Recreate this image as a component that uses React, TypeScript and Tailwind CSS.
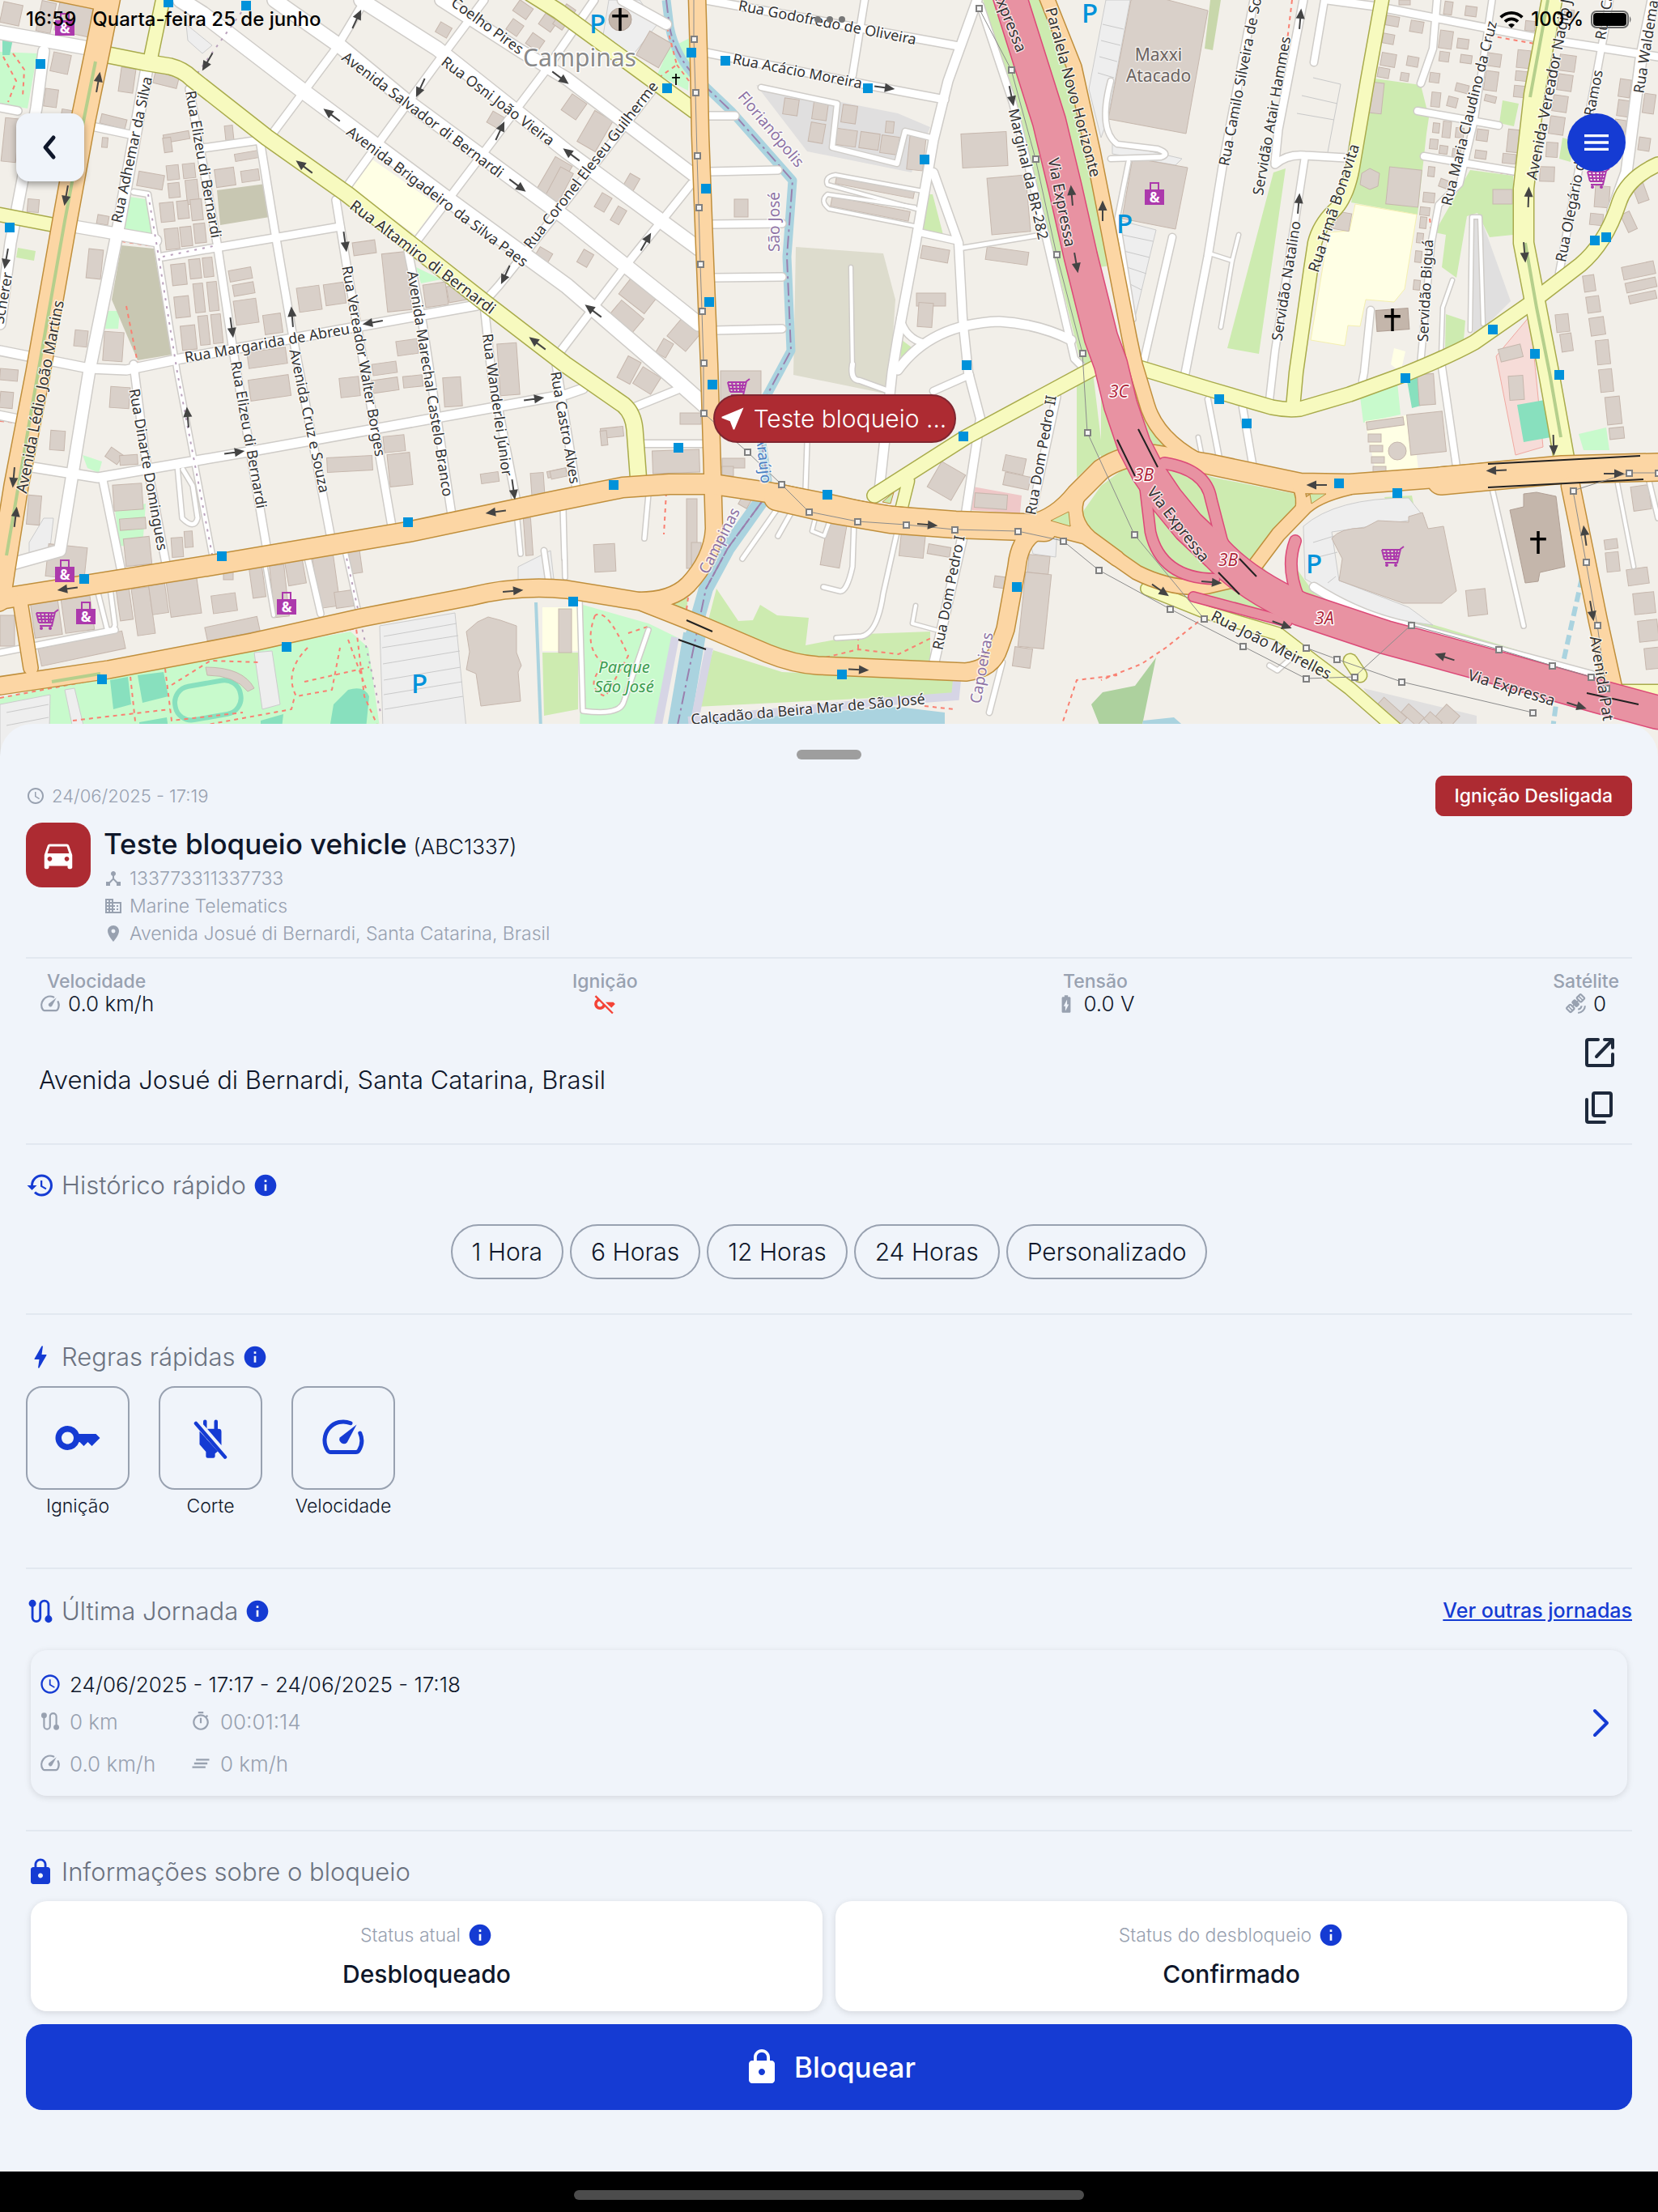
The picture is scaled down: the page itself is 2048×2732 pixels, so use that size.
import React from 'react';
import {
  MdAccessTime,
  MdBatteryChargingFull,
  MdBolt,
  MdBusiness,
  MdClearAll,
  MdDeviceHub,
  MdDirectionsCar,
  MdHistory,
  MdInfo,
  MdKey,
  MdKeyOff,
  MdLocationOn,
  MdLock,
  MdMenu,
  MdNearMe,
  MdOutlineTimer,
  MdSatelliteAlt,
  MdWifi,
} from 'react-icons/md';

/* ---------- Map data ---------- */

type Road = [d: string, width: number];
type Label = [text: string, x: number, y: number, angle: number, size: number];
type Box = [x: number, y: number, w: number, h: number, angle: number];

const whiteRoads: Road[] = [
  ['M223 0L250 17L375 113L549 243L700 353L836 470L872 502', 18],
  ['M339 0L420 57L500 123L700 270L863 400', 17],
  ['M446 0L540 60L700 187L863 307', 17],
  ['M545 0L643 63L700 97L858 217', 15],
  ['M769 0L823 30', 12],
  ['M451 0L415 60L335 167', 9],
  ['M598 0L536 83L429 230', 9],
  ['M734 0L674 87L594 193L513 300', 9],
  ['M809 107L680 273L616 353L598 373', 9],
  ['M854 227L769 333L693 433', 9],
  ['M181 87L147 277L110 460L74 680L13 697', 14],
  ['M0 40L112 60', 16],
  ['M54 63L45 133L13 300L0 400', 13],
  ['M0 133L22 137', 9],
  ['M118 157L165 167', 9],
  ['M94 280L192 297', 14],
  ['M165 237L183 240L196 317L219 460L263 690', 6],
  ['M234 110L268 300L288 433L330 680', 9],
  ['M250 183L321 173L339 283L362 417L408 660', 9],
  ['M201 317L344 293L420 280', 9],
  ['M415 247L429 333L484 650', 9],
  ['M0 433L110 455L156 457L223 443L589 377', 11],
  ['M504 310L522 400L558 636', 9],
  ['M598 377L607 460L638 620', 9],
  ['M687 450L713 610', 9],
  ['M40 577L121 590L312 557L700 487L720 480', 11],
  ['M165 450L179 560L205 696', 9],
  ['M127 593L150 706', 9],
  ['M0 513L20 517', 10],
  ['M219 575L225 640Q240 655 244 640L238 600L226 580', 5],
  ['M792 548L870 548', 8],
  ['M783 503L845 478', 9],
  ['M876 143L908 143', 9],
  ['M876 212L961 210', 9],
  ['M879 277L966 276', 9],
  ['M881 343L966 342', 9],
  ['M883 408L966 406', 9],
  ['M872 0L1184 57', 9],
  ['M872 65L1082 107L1167 123', 9],
  ['M1068 0L1053 93', 8],
  ['M1207 0L1171 100L1153 173L1131 300L1109 417L1102 460L1086 606', 11],
  ['M1211 7L1251 127L1292 293L1327 443L1340 456', 8],
  ['M1153 213L1184 300L1189 393L1196 460L1211 517L1193 634', 10],
  ['M1135 287L1180 297', 8],
  ['M1184 307L1287 290', 5],
  ['M1109 457Q1150 400 1234 397Q1283 400 1323 420', 11],
  ['M1112 393Q1118 418 1142 424', 8],
  ['M1053 450Q1050 470 1062 470L1095 482', 6],
  ['M1153 483L1198 463', 8],
  ['M1051 330L1053 458', 4],
  ['M940 108L1034 128L1028 182L1108 202L1118 162L1150 170', 6],
  ['M1140 236L1032 216Q1018 218 1022 228L1132 258', 4],
  ['M1134 280L1024 258Q1012 248 1022 240L1130 256', 4],
  ['M997 547L995 605', 5],
  ['M966 620L917 690', 5],
  ['M979 630L961 662', 5],
  ['M1008 636L1003 656L1018 662L1026 640', 4],
  ['M1055 643L1053 700Q1046 732 1037 730L1017 725', 5],
  ['M1109 653L1091 733Q1084 782 1064 786L1033 788', 5],
  ['M1131 748L1127 770L1156 778', 4],
  ['M1189 663L1153 822', 11],
  ['M1305 490L1274 636', 9],
  ['M1238 818L1222 880', 6],
  ['M696 627L698 713', 5],
  ['M801 610L796 665', 5],
  ['M326 690L338 760', 4],
  ['M378 680L396 758', 7],
  ['M426 680L446 770', 5],
  ['M120 728L132 776Q138 784 142 772L136 726', 5],
  ['M142 778L0 806', 7],
  ['M638 632L643 684', 5],
  ['M672 680L678 722', 6],
  ['M695 628L697 690', 5],
  ['M801 778L770 868Q764 884 720 878L716 740', 5],
  ['M1549 0L1511 200L1492 317L1463 466', 9],
  ['M1610 0L1579 160L1575 200', 9],
  ['M1575 203Q1590 190 1612 192L1663 195', 9],
  ['M1612 193L1575 433L1568 494', 8],
  ['M1636 0L1623 77', 8],
  ['M1448 293L1413 445', 8],
  ['M1494 313L1522 322L1508 404M1522 322L1530 290', 4],
  ['M1640 0L1700 8L1900 47L2048 70', 9],
  ['M1775 0L1770 60L1755 103', 8],
  ['M1843 0L1821 150L1803 227L1777 253L1768 300L1755 445', 7],
  ['M1751 137L1851 155', 8],
  ['M1759 193L1873 212', 8],
  ['M1988 0L1983 33L1950 210L1926 337', 8],
  ['M2042 0L2027 73L2009 213L1992 260', 13],
  ['M1693 383L1685 460L1683 470', 8],
  ['M1794 346L1782 380L1780 440', 4],
  ['M1816 408L1818 268L1828 268L1832 400', 4],
  ['M1781 453L1799 576', 8],
  ['M1492 493L1508 576', 6],
  ['M1480 540L1486 570', 4],
  ['M1535 503L1549 584', 8],
  ['M1843 603L1882 773', 5],
  ['M1998 597L2018 700', 4],
  ['M2036 590L2048 640', 5],
  ['M1623 725Q1680 762 1742 774L1966 834', 10],
  ['M1598 810L1578 828L1568 822', 5],
  ['M1372 100Q1356 160 1380 178L1430 184Q1446 190 1434 194L1372 196', 6],
  ['M1394 200L1380 270L1400 394', 5],
];

const yellowRoads: Road[] = [
  ['M134 68L179 77L210 82Q226 86 237 97L330 170L429 240L603 377L698 450L770 500Q782 510 784 530L789 597', 19],
  ['M201 0L185 77', 16],
  ['M0 265L67 278', 16],
  ['M655 -8L690 14L858 137', 18],
  ['M1360 450L1193 540L1080 612', 17],
  ['M1122 594L1113 630', 14],
  ['M1707 0L1689 100L1672 200Q1666 240 1650 258Q1630 276 1624 300L1619 333L1601 460L1597 504', 16],
  ['M1917 0L1895 117L1882 233L1882 300L1895 367L1913 460L1932 566', 24],
  ['M2048 203Q2010 220 2000 250Q1984 300 1952 327L1887 377L1821 423Q1790 440 1733 463L1667 487L1606 505Q1590 507 1571 503L1492 480L1400 452', 17],
  ['M1417 727L1492 757L1579 783L1623 817L1667 850L1724 900', 15],
  ['M1668 816L1680 834', 16],
  ['M2000 855L2048 855', 18],
];

const orangeRoads: Road[] = [
  ['M56 -8L134 8', 12],
  ['M134 -5L121 60L103 147L80 273L47 460L20 600L4 700L-2 740', 29],
  ['M861 -5L863 67L865 167L870 300L876 450L880 583L882 653Q880 690 850 722Q830 742 790 742', 20],
  ['M0 740L112 722L268 697L504 657L690 618L769 602L827 598L881 598L948 608L1019 622L1082 636L1180 646L1260 650Q1300 648 1330 610L1360 580Q1390 560 1426 562L1492 573L1606 597L1667 598L1799 588L1865 582L2048 576', 24],
  ['M960 614L1030 630L1100 642L1180 648L1290 652', 32],
  ['M1780 594L1865 586L1930 580L2048 577', 33],
  ['M0 847L134 827L312 793L446 763L580 737Q640 722 700 728L792 743L868 773L948 807Q980 820 1010 822L1193 830Q1226 826 1234 800L1242 777L1256 700Q1260 660 1290 652', 21],
  ['M1332 610Q1318 640 1346 665L1380 690', 18],
  ['M1290 650L1341 663L1404 707Q1450 730 1492 724L1522 717L1549 700L1579 660L1608 630Q1624 612 1667 602', 17],
  ['M1602 600Q1610 612 1606 632', 12],
  ['M25 743L38 825', 17],
  ['M1940 600L1957 683L1974 767L1994 858', 22],
  ['M1292 -5L1327 83L1350 187L1367 273L1395 417L1402 450L1417 500Q1430 545 1490 574', 17],
];

const pinkRoads: Road[] = [
  ['M1413 590L1421 657Q1434 714 1500 715', 12],
  ['M1438 572Q1490 580 1496 617L1509 667L1524 700', 13],
  ['M1600 668Q1588 700 1604 738L1645 770', 13],
  ['M1474 737L1590 768', 11],
  ['M1247 -5L1296 150L1316 233L1335 317L1360 417L1372 450L1384 500L1401 550L1418 583L1441 617L1468 650L1504 684Q1540 722 1606 752L1711 787L1843 823L1974 860L2048 880', 40],
];

const river = 'M823 0L827 33Q834 70 862 98L903 137L979 223L972 317L977 433L948 487Q932 510 940 540L948 593L943 617L899 677L872 727';

const streetLabels: Label[] = [
  ['Rua Adhemar da Silva', 163, 185, -78, 18],
  ['Rua Elizeu di Bernardi', 251, 203, 80, 18],
  ['Avenida Lédio João Martins', 50, 490, -79, 19],
  ['Avenida Brigadeiro da Silva Paes', 540, 243, 37, 18],
  ['Avenida Salvador di Bernardi', 522, 142, 37, 18],
  ['Rua Osni João Vieira', 615, 125, 37, 18],
  ['Coelho Pires', 602, 32, 36, 18],
  ['Rua Coronel Eleseu Guilherme', 730, 204, -52, 18],
  ['Rua Altamiro di Bernardi', 522, 318, 37, 19],
  ['Rua Margarida de Abreu', 330, 424, -10, 18],
  ['Rua Vereador Walter Borges', 449, 446, 80, 18],
  ['Rua Elizeu di Bernardi', 307, 537, 80, 18],
  ['Avenida Cruz e Souza', 382, 520, 78, 18],
  ['Avenida Marechal Castelo Branco', 531, 474, 81, 18],
  ['Rua Wanderlei Júnior', 614, 500, 82, 18],
  ['Rua Castro Alves', 698, 528, 80, 18],
  ['Rua Dinarte Domingues', 183, 580, 80, 18],
  ['Scherer', 4, 368, -80, 18],
  ['Rua Godofredo de Oliveira', 1022, 28, 11, 18],
  ['Rua Acácio Moreira', 985, 88, 11, 18],
  ['Marginal da BR-282', 1270, 215, 77, 18],
  ['Via Expressa', 1311, 250, 79, 19],
  ['Via Expressa', 1241, 12, 68, 19],
  ['Paralela Novo Horizonte', 1325, 114, 75, 19],
  ['Rua Camilo Silveira de Souza', 1535, 86, -79, 18],
  ['Servidão Atair Hammes', 1571, 143, -80, 18],
  ['Servidão Natalino', 1589, 347, -81, 18],
  ['Rua Irmã Bonavita', 1648, 257, -72, 19],
  ['Servidão Biguá', 1761, 359, -87, 18],
  ['Rua Maria Claudino da Cruz', 1815, 140, -76, 18],
  ['Avenida Vereador Nagib Jabor', 1918, 90, -79, 19],
  ['Rua Olegário da Silva Ramos', 1951, 205, -79, 18],
  ['Rua Waldemar', 2034, 54, -81, 18],
  ['Rua Ca', 1982, 20, -80, 18],
  ['Rua Dom Pedro II', 1286, 562, -80, 18],
  ['Rua Dom Pedro I', 1172, 732, -79, 18],
  ['Calçadão da Beira Mar de São José', 998, 876, -5, 18],
  ['Via Expressa', 1455, 648, 52, 19],
  ['Rua João Meirelles', 1570, 797, 27, 19],
  ['Via Expressa', 1867, 850, 17, 19],
  ['Avenida Pat', 1978, 838, 81, 19],
];

const districtLabels: Label[] = [
  ['Florianópolis', 952, 160, 50, 19],
  ['São José', 957, 274, -90, 19],
  ['Campinas', 889, 668, -63, 19],
  ['Capoeiras', 1213, 825, -80, 19],
];

const exits: [string, number, number][] = [
  ['3C', 1382, 485],
  ['3B', 1413, 588],
  ['3B', 1517, 693],
  ['3A', 1636, 765],
];

const parkings = [[738, 30], [1346, 17], [1389, 277], [518, 845], [1623, 697]];

const busStops = [
  [208, 3], [304, 7], [50, 79], [12, 281], [854, 65], [896, 75], [1072, 109], [824, 109],
  [1142, 197], [872, 233], [876, 373], [1194, 451], [1970, 297], [1984, 293], [1844, 407],
  [1896, 437], [274, 687], [504, 645], [104, 715], [354, 799], [126, 839], [880, 475],
  [838, 553], [758, 599], [1022, 611], [1190, 539], [708, 743], [1256, 725], [1040, 833],
  [1736, 467], [1506, 493], [1540, 523], [1654, 597], [1726, 609], [1926, 463],
];

const powerLines = [
  [[857, -10], [857, 48], [859, 114], [861, 192], [863, 256], [865, 326], [867, 384], [869, 448], [869, 510], [923, 558], [965, 598], [999, 632], [1059, 644], [1119, 648], [1179, 654], [1257, 656], [1313, 668], [1357, 704], [1445, 752], [1535, 798], [1613, 838], [1673, 836], [1743, 772], [1851, 802], [1917, 822], [1965, 836]],
  [[1209, 10], [1249, 86], [1279, 196], [1305, 314], [1337, 436], [1343, 534], [1401, 660], [1487, 764]],
  [[1613, 800], [1651, 814], [1731, 842], [1893, 880]],
  [[2048, 584], [2012, 584], [1943, 606], [1959, 694], [1973, 772], [1984, 850]],
];

const arrows: [number, number, number][] = [
  [121, 103, -80], [82, 240, 100], [8, 318, 100], [257, 75, 120], [440, 25, -65], [520, 107, 115],
  [411, 143, -143], [377, 207, -143], [638, 228, 37], [617, 163, -65], [625, 338, 115], [426, 297, 82],
  [286, 403, 82], [361, 393, -95], [462, 398, 170], [665, 425, -143], [691, 95, 37], [797, 300, -60],
  [734, 385, -143], [707, 192, -143], [1091, 108, 8], [1249, 117, 78], [1324, 243, -95], [1329, 323, 80],
  [1362, 262, -90], [1606, 25, -85], [1604, 253, -85], [1888, 245, -88], [1883, 310, 85], [17, 588, 95],
  [19, 640, -83], [232, 517, -95], [288, 559, -8], [658, 493, -8], [634, 603, 82], [614, 632, 172],
  [85, 727, 172], [632, 730, -5], [1144, 648, 5], [1059, 827, 3], [1628, 599, 180], [1850, 581, 178],
  [1992, 585, 0], [1919, 548, 88], [1958, 663, -98], [1966, 753, 80], [1495, 719, 5], [1582, 771, 20],
  [1786, 812, -162], [1946, 871, 17], [1432, 728, 35],
];

const buildings: Box[] = [
  // north-west blocks
  [2, 4, 24, 26, 12], [48, 2, 18, 38, 12], [70, 6, 46, 36, 12], [64, 66, 22, 24, 12], [55, 110, 16, 22, 8],
  [148, 84, 18, 30, 8], [190, 92, 30, 14, 14], [4, 146, 18, 54, 6], [76, 136, 18, 8, 10], [124, 144, 32, 12, 14],
  [126, 170, 7, 12, 5], [202, 164, 32, 10, -10], [202, 170, 10, 18, -8], [278, 155, 10, 18, -6], [290, 188, 30, 9, -10],
  [34, 246, 14, 16, 5], [120, 266, 14, 11, 10], [108, 308, 18, 36, 6], [92, 408, 16, 20, 6], [128, 410, 24, 36, 4],
  [206, 204, 15, 18, -6], [226, 202, 15, 18, -6], [208, 226, 14, 18, -6], [230, 222, 15, 30, -6], [198, 250, 17, 24, -6],
  [219, 248, 14, 22, -6], [236, 246, 14, 26, -6], [204, 282, 17, 26, -6], [223, 280, 14, 24, -6], [240, 276, 14, 24, -6],
  [170, 214, 32, 18, 10], [266, 208, 24, 22, -8], [298, 210, 22, 14, -8], [212, 326, 18, 26, -6], [234, 320, 14, 24, -6],
  [251, 318, 12, 24, -6], [216, 366, 18, 26, -6], [240, 350, 12, 36, -6], [257, 348, 12, 36, -6], [224, 402, 18, 30, -6],
  [246, 390, 12, 36, -6], [262, 388, 12, 36, -6], [283, 332, 28, 14, -10], [288, 350, 26, 14, -10], [290, 370, 28, 30, -8],
  [326, 388, 22, 24, -8], [368, 354, 28, 30, -8], [401, 350, 25, 26, -8], [436, 298, 28, 16, -8], [475, 312, 30, 72, -6],
  [524, 350, 28, 28, -8], [553, 352, 24, 20, -10], [490, 420, 26, 18, -8], [460, 448, 30, 14, -8], [616, 424, 24, 64, -4],
  [306, 432, 48, 20, -8], [308, 466, 50, 26, -8], [420, 466, 24, 24, -6], [456, 468, 36, 16, -8], [498, 464, 24, 14, -6],
  [548, 466, 22, 36, -4], [474, 538, 26, 20, -6], [480, 560, 28, 40, -6], [404, 564, 56, 18, -3], [594, 584, 22, 12, -8],
  [656, 584, 16, 28, -4], [676, 580, 24, 8, -12], [136, 478, 24, 26, 4], [132, 556, 18, 14, 35], [148, 562, 22, 12, -4],
  [62, 532, 18, 24, 4], [34, 612, 16, 36, 5], [0, 484, 16, 20, 5], [0, 456, 22, 14, 5], [140, 598, 36, 32, -4],
  [148, 640, 32, 14, -4], [154, 664, 32, 34, -6], [212, 664, 14, 24, -4], [228, 656, 10, 20, -4],
  // south-west blocks
  [58, 674, 48, 40, 6], [40, 738, 34, 48, -8], [78, 738, 36, 42, -8], [0, 760, 18, 38, 0], [48, 790, 106, 22, -12],
  [146, 728, 16, 38, -8], [166, 726, 22, 58, -8], [186, 722, 20, 36, -8], [208, 714, 38, 46, -8], [262, 734, 30, 22, -8],
  [254, 768, 66, 18, -12], [276, 704, 12, 12, 0], [310, 700, 16, 38, -8], [336, 698, 18, 64, -6], [354, 692, 22, 30, -10],
  [390, 686, 26, 64, -8], [414, 730, 22, 20, -8], [432, 680, 14, 28, -8], [648, 640, 9, 46, -4], [690, 752, 16, 54, 0],
  // centre
  [636, 4, 20, 16, 35], [668, 20, 18, 16, 35], [628, 26, 16, 16, 35], [652, 44, 18, 16, 35],
  [540, 30, 16, 14, 30], [604, 140, 16, 16, 30], [672, 196, 24, 50, 30], [698, 120, 22, 24, 35], [722, 140, 26, 44, 30],
  [690, 6, 14, 30, 35], [662, 308, 18, 16, 30], [682, 208, 18, 40, 28], [772, 216, 14, 22, 30], [738, 240, 14, 20, 30],
  [758, 256, 12, 20, 30], [716, 310, 14, 18, 30], [768, 352, 40, 26, 38], [752, 378, 36, 36, 40], [830, 398, 30, 30, 40],
  [814, 420, 14, 20, 30], [768, 442, 18, 30, 28], [786, 458, 26, 24, 32], [840, 510, 26, 14, 0], [742, 528, 28, 12, -6],
  [742, 532, 8, 18, -6], [806, 556, 58, 28, -2], [890, 458, 50, 44, 0], [892, 566, 28, 12, 0], [892, 576, 14, 12, 0],
  [734, 672, 26, 34, -3], [848, 616, 13, 86, 0], [854, 670, 12, 28, 0], [914, 614, 12, 12, 30], [680, 580, 20, 10, -12],
  [792, 44, 32, 34, 30], [907, 246, 17, 22, 0],
  [968, 122, 18, 20, 8], [1004, 126, 18, 22, 8], [1040, 130, 18, 22, 8], [1000, 152, 18, 24, 10], [1032, 160, 26, 20, 8],
  [1062, 164, 24, 20, 8], [1088, 168, 22, 22, 8], [1122, 166, 20, 44, 6], [1094, 150, 10, 14, 6],
  [1032, 224, 98, 12, 11], [1026, 252, 98, 12, 11],
  [1188, 164, 56, 42, -3], [1222, 218, 48, 70, -5], [1138, 306, 34, 16, 10], [1218, 308, 52, 16, 8],
  [1132, 362, 36, 16, 0], [1134, 374, 18, 30, 4], [1152, 576, 34, 36, 30], [1240, 564, 26, 20, 12], [1240, 586, 32, 16, 12],
  [1204, 610, 40, 18, 4], [1018, 642, 24, 58, 10], [1112, 656, 30, 32, 6], [1146, 674, 28, 12, 10],
  [1270, 686, 26, 22, 6], [1262, 708, 32, 92, 6], [1252, 800, 22, 24, 8], [1228, 712, 14, 14, 8],
  // east
  [1692, 102, 16, 38, 6], [1714, 208, 40, 46, 6], [1646, 262, 22, 22, 10],
  [1712, 20, 16, 12, 10], [1728, 0, 14, 6, 0], [1742, 26, 16, 14, 10], [1708, 42, 14, 12, 10], [1706, 66, 18, 16, 10],
  [1738, 70, 14, 12, 10], [1702, 84, 14, 12, 10], [1730, 90, 10, 10, 10], [1784, 2, 10, 16, 8], [1810, 8, 14, 12, 8],
  [1778, 38, 16, 22, 8], [1800, 48, 14, 12, 8], [1778, 64, 12, 12, 8], [1804, 68, 14, 10, 8], [1766, 90, 12, 12, 8],
  [1798, 104, 16, 10, 14], [1768, 114, 11, 18, 6], [1788, 120, 12, 12, 14], [1836, 66, 18, 16, 8], [1834, 88, 16, 24, 8],
  [1834, 118, 14, 8, 14], [1770, 152, 8, 12, 6], [1782, 150, 10, 20, 6], [1798, 158, 10, 12, 6], [1766, 172, 10, 12, 6],
  [1778, 180, 10, 10, 8], [1794, 184, 10, 10, 8], [1824, 160, 14, 14, 8], [1822, 186, 14, 10, 8], [1764, 206, 8, 12, 6],
  [1778, 222, 12, 10, 20], [1758, 238, 14, 12, 6], [1754, 256, 12, 10, 6], [1754, 268, 8, 14, 6], [1750, 288, 8, 12, 6],
  [1748, 310, 8, 14, 6], [1746, 346, 8, 12, 6], [1874, 62, 16, 22, 6], [1872, 88, 16, 12, 6], [1870, 106, 14, 14, 6],
  [1884, 26, 12, 12, 6], [1862, 160, 14, 28, 6], [1856, 190, 16, 12, 6], [1844, 234, 24, 18, 0], [1932, 12, 12, 12, 6],
  [1926, 68, 20, 20, 8], [1924, 92, 18, 20, 8], [1918, 118, 18, 20, 8], [1914, 144, 18, 22, 8], [1910, 176, 14, 18, 4],
  [1902, 206, 18, 18, 2], [2000, 98, 14, 22, 8], [1998, 124, 18, 20, 8], [1994, 148, 14, 22, 8], [2030, 116, 14, 24, 8],
  [2024, 170, 14, 16, 8], [1970, 230, 18, 26, 4], [1964, 264, 16, 14, 6], [2006, 262, 12, 24, -25], [2018, 218, 14, 32, -20],
  [2004, 326, 40, 16, -12], [2008, 346, 38, 12, -12], [2012, 362, 34, 10, -12], [1922, 388, 16, 22, -6],
  [1928, 412, 14, 22, -8], [1852, 428, 28, 16, -14], [1956, 340, 14, 20, -8], [1960, 366, 16, 20, -8],
  [1964, 392, 18, 22, -8], [1972, 420, 16, 30, -6], [1976, 456, 16, 28, -6], [1984, 490, 18, 34, -6], [1988, 528, 18, 14, -6],
  [1864, 464, 18, 30, -4], [1752, 462, 20, 38, -4], [1740, 510, 44, 50, -6], [1688, 518, 46, 10, -8],
  [1690, 536, 16, 10, 0], [1692, 550, 16, 8, 0], [1694, 564, 16, 8, 0], [1696, 576, 16, 8, 0],
  [1812, 728, 24, 32, -6], [2016, 600, 22, 30, -8], [1982, 666, 16, 12, -8], [1984, 682, 16, 24, -6],
  [2010, 702, 26, 20, -8], [2018, 732, 26, 26, -6], [2024, 766, 24, 26, -6], [2032, 800, 20, 26, -6],
  [1700, 872, 38, 14, 42], [1732, 876, 26, 14, 42], [1776, 874, 22, 24, 42], [1760, 884, 20, 12, 42],
];

function RoadLayer({ roads, casing, fill }: { roads: Road[]; casing: string; fill: string }) {
  return (
    <g fill="none" strokeLinejoin="round">
      {roads.map(([d, w]) => (
        <path key={`c${d}`} d={d} stroke={casing} strokeWidth={w + 3} strokeLinecap="round" />
      ))}
      {roads.map(([d, w]) => (
        <path key={d} d={d} stroke={fill} strokeWidth={w} strokeLinecap="round" />
      ))}
    </g>
  );
}

function MapLabels({ labels, color, halo }: { labels: Label[]; color: string; halo: string }) {
  return (
    <g fill={color} stroke={halo} strokeWidth={3} paintOrder="stroke" strokeLinejoin="round" textAnchor="middle">
      {labels.map(([text, x, y, angle, size]) => (
        <text key={`${text}${x}`} fontSize={size} transform={`translate(${x} ${y}) rotate(${angle})`} dy="6">
          {text}
        </text>
      ))}
    </g>
  );
}

function Cross({ x, y, s }: { x: number; y: number; s: number }) {
  return (
    <path
      d={`M${x} ${y - s}V${y + s}M${x - s * 0.7} ${y - s * 0.3}H${x + s * 0.7}`}
      stroke="#000"
      strokeWidth={s / 4}
    />
  );
}

function ShopBag({ x, y }: { x: number; y: number }) {
  return (
    <g>
      <rect x={x - 12} y={y - 5} width={24} height={19} fill="#ac39ac" />
      <path d={`M${x - 5} ${y - 5}V${y - 13}H${x + 5}V${y - 5}`} fill="none" stroke="#ac39ac" strokeWidth={2} />
      <text x={x} y={y + 11} fontSize={17} fontWeight={700} fill="#fff" textAnchor="middle">&amp;</text>
    </g>
  );
}

function Cart({ x, y }: { x: number; y: number }) {
  return (
    <g transform={`translate(${x} ${y})`} fill="none" stroke="#ac39ac" strokeWidth={2}>
      <path d="M14 -12L10 -9L6 8H-9M-13 -8H10M-12 -4H9M-11 0H8M-10 4H7M-13 -8L-10 4M-8 -8L-6 4M-3 -8L-2 4M2 -8V4M6 -8L4 4" />
      <circle cx={-7} cy={11} r={1} />
      <circle cx={4} cy={11} r={1} />
    </g>
  );
}

function MapCanvas() {
  return (
    <svg
      viewBox="0 0 2048 934"
      preserveAspectRatio="xMidYMin slice"
      className="block w-full bg-[#f2efe9] font-['Noto_Sans',sans-serif]"
      role="img"
      aria-label="Mapa"
    >
      {/* land use */}
      <g fill="#cdebb0">
        <path d="M1698 97L1755 105L1765 145L1762 165L1751 265L1669 250Z" />
        <path d="M1816 210L1869 217L1869 290L1840 293L1825 263L1812 267L1799 343L1781 330L1786 290L1772 287Z" />
        <path d="M1573 213L1588 208L1555 437L1516 430Z" />
        <path d="M1856 124L1876 128L1870 156L1852 152ZM1930 170L1944 174L1940 200L1926 196ZM1786 388L1810 396L1808 420L1785 430Z" />
        <path d="M1134 240L1152 240L1165 290L1138 286ZM1114 420L1130 432L1112 450Z" />
        <path d="M1330 470L1350 460L1362 560L1330 590ZM1360 460L1375 500L1400 556L1360 575Z" />
        <path d="M1400 450L1416 510L1444 550L1424 556L1400 500Z" />
        <path d="M1332 640L1360 600L1400 570L1440 572L1500 590L1600 610L1605 635L1560 700L1600 750L1540 745L1450 720L1400 700L1350 670Z" />
        <path d="M1480 730L1530 720L1580 765ZM1600 700L1625 735L1645 760L1600 745Z" />
        <path d="M885 727L912 767L930 766L939 747L960 760L999 763L995 797L1068 783L1149 780L1149 820L992 813L872 777Z" />
        <path d="M881 803L966 830L1180 840L1178 857L859 873Z" />
        <path d="M806 752L850 738L846 768ZM670 806L714 806L714 876L672 884ZM1710 614L1744 612L1746 622L1716 628Z" />
        <path d="M22 306L44 310L42 322L20 318Z" />
      </g>
      <path d="M1623 738L1720 772L1966 846" stroke="#cdebb0" strokeWidth={30} fill="none" />
      <path d="M1222 -5L1270 150L1296 260L1318 340L1345 450" stroke="#cdebb0" strokeWidth={18} fill="none" />
      <path d="M1275 -5L1312 100L1345 230L1356 330" stroke="#cdebb0" strokeWidth={22} fill="none" />
      <g fill="#c8facc">
        <path d="M0 64L46 66L34 134L0 128Z" />
        <path d="M160 243L180 246L188 292L153 286Z" />
        <path d="M67 847L201 823L433 780L455 800L475 940L0 940L0 862Z" />
        <path d="M720 747L801 770L836 787L809 900L716 900Z" />
        <path d="M514 330L545 345L520 350ZM1680 490L1726 472L1730 512L1684 522ZM1950 536L1984 528L1988 556L1956 556Z" />
        <path d="M142 630L180 622L176 676L148 674ZM102 562L126 570L122 584L108 578ZM132 384L148 384L146 406L130 406Z" />
        <path d="M854 46L826 60L812 92L850 112Z" />
      </g>
      <g fill="#c8c7b2">
        <path d="M268 235L328 227L333 268L272 278Z" />
        <path d="M150 303L190 307L212 438L170 445L138 370Z" />
      </g>
      <path d="M983 305L1091 313L1106 370L1098 487L980 463Z" fill="#dddccd" />
      <path d="M934 105L1109 140L1149 157L1126 213L997 187Z" fill="#e0dfdf" />
      <g fill="#ffffe5">
        <path d="M460 197L540 253L513 290L433 233Z" />
        <path d="M1674 252L1750 265L1735 357L1722 373L1687 370L1680 403L1665 402L1661 427L1619 420L1641 287L1667 285Z" stroke="#f5f0b0" />
        <path d="M1686 520L1744 512L1752 580L1700 586ZM670 750L714 750L714 804L670 804ZM1722 430L1736 434L1730 460L1718 450Z" />
      </g>
      <path d="M1848 440L1890 390L1906 552L1872 562Z" fill="#f6dcd8" stroke="#f0a8a0" />
      <path d="M1196 600L1262 612L1260 634L1200 630Z" fill="#efc8c8" />
      <g fill="#eee" stroke="#ccc">
        <path d="M469 773L562 757L576 900L473 900Z" />
        <path d="M1610 650Q1650 615 1740 615L1760 640L1645 657L1654 717L1740 750L1770 772L1690 760L1612 715Z" />
        <path d="M1366 0L1396 0L1368 148L1360 170L1345 110ZM1374 176L1460 196L1452 204L1374 190ZM1382 272L1428 284L1402 392L1386 330Z" />
        <path d="M0 870L62 858L60 940L0 940ZM752 0L790 0L812 30L780 70L744 50ZM230 30L262 56L250 66L232 50ZM1270 660L1306 652L1304 688L1276 684Z" />
        <path d="M54 640L66 640L62 676L36 690L36 670ZM640 700L680 680L684 715L640 720Z" />
        <path d="M80 852L92 850L104 900L90 900ZM314 806L336 804L346 870L324 876Z" />
      </g>
      <path d="M1818 268L1828 266L1866 372L1820 418Z" fill="#e0dfdf" />
      <path d="M1684 850L1824 884L1824 910L1720 900Z" fill="#e0dfdf" />
      {/* car park stripes */}
      <g stroke="#c9c9c9" strokeWidth={1} fill="none">
        <path d="M472 800L566 785M473 820L568 804M474 840L569 824M474 858L571 842M475 876L572 860M474 786L564 770" />
        <path d="M1362 30L1388 36M1360 50L1384 56M1358 70L1380 76M1356 90L1376 96M1386 290L1424 298M1388 310L1420 318M1392 330L1416 338M1394 350L1410 358" />
        <path d="M8 880L60 870M8 896L60 886M1620 690L1652 682M1622 670L1648 662M1640 720L1650 712" />
        <path d="M1622 96L1656 104L1640 188M1608 118L1652 128M1602 140L1648 148" />
      </g>
      <path d="M1428 812L1410 900L1360 900L1348 870L1362 855L1402 847Z" fill="#add19e" />
      <path d="M1495 0L1508 0L1498 62L1488 60Z" fill="#c8d7ab" />
      {/* sport pitches and track */}
      <g fill="#88e0be">
        <path d="M136 840L158 836L162 870L140 876ZM170 834L202 830L208 860L176 868ZM408 894L412 870L430 852Q450 846 456 860L452 900ZM172 892L206 886L208 900L172 900ZM322 890L350 882L348 900L322 900Z" />
        <path d="M3 50L16 48L12 68L3 68ZM1738 470L1758 464L1766 498L1744 504ZM1874 500L1908 494L1916 540L1882 546Z" />
        <rect x={216} y={844} width={82} height={42} rx={20} fill="none" stroke="#88e0be" strokeWidth={6} transform="rotate(-10 256 866)" />
      </g>
      {/* water */}
      <g fill="none" stroke="#aad3df">
        <path d={river} strokeWidth={11} strokeLinejoin="round" />
        <path d="M945 612L899 677L872 727L856 783L834 900" strokeWidth={18} />
        <path d="M858 783L838 900" strokeWidth={28} />
        <path d="M662 744L668 900" strokeWidth={4} />
        <path d="M1954 714L1926 840L1918 900" strokeWidth={6} strokeDasharray="12 6" />
      </g>
      <path d="M854 900L870 890L1109 873L1167 880L1167 910L854 910ZM1412 890L1450 886L1466 900L1410 900Z" fill="#aad3df" />
      <g fill="none" stroke="#d6d5e5" strokeWidth={10}>
        <path d="M834 787L812 900M876 800L856 900M850 890L1100 866L1180 860L1182 840" />
      </g>
      <g fill="none" stroke="#9a80ae" strokeWidth={2} strokeDasharray="16 5 3 5">
        <path d={river} />
        <path d="M943 617L899 677L872 727L836 900" />
      </g>
      {/* buildings */}
      <g fill="#d9d0c9" stroke="#c6b7ad" strokeWidth={1}>
        {buildings.map(([x, y, w, h, a]) => (
          <rect key={`${x}-${y}`} x={x} y={y} width={w} height={h} transform={`rotate(${a} ${x + w / 2} ${y + h / 2})`} />
        ))}
        <path d="M1397 0L1420 -6L1492 13L1465 165L1369 147Z" />
        <path d="M1399 195L1467 207L1452 283L1386 270Z" />
        <path d="M576 780L590 768L603 762L618 766L638 773L638 806L644 822L640 830L643 866L594 872L588 832L576 827L580 805Z" />
        <path d="M1645 665Q1655 652 1685 652L1702 643L1740 645L1740 638L1757 633L1764 653L1783 650L1799 730L1781 745L1733 745L1654 717L1658 690Z" />
        <path d="M1692 208L1704 214L1702 230L1692 234L1680 228L1682 214Z" />
        <circle cx={1726} cy={557} r={11} />
        <path d="M254 824Q300 824 314 850L306 854Q290 834 256 834Z" />
      </g>
      <g fill="#c4b6ab" stroke="#b09f94" strokeWidth={1}>
        <path d="M1882 610L1898 608L1922 613L1933 700L1902 707L1900 718L1884 720L1865 630L1882 626Z" />
        <rect x={1700} y={382} width={40} height={26} transform="rotate(-4 1720 395)" />
        <circle cx={766} cy={24} r={14} />
      </g>

      {/* footpaths */}
      <g fill="none" stroke="#fa8072" strokeWidth={2} strokeDasharray="5 5">
        <path d="M4 70L20 100L10 126M16 66L30 86L28 120M150 298L190 304M156 378L170 448M0 436L100 458M0 520L20 522" />
        <path d="M0 862L200 824L440 776L450 860L468 900M160 826L168 900M204 826L212 890L300 880M212 846L260 816L320 818M380 800Q350 830 366 860L410 852L420 800M376 842L456 824M430 790L452 850M90 890L210 876M240 898L360 876L364 860" />
        <path d="M824 34L836 80L808 100M836 80L854 104M823 608L820 660M850 738L846 768M735 760Q720 800 746 820Q720 850 748 860L776 810Q750 750 735 760M776 782L800 774" />
        <path d="M1020 812L1060 802L1110 808L1150 788M1060 786L1060 806M1480 768L1440 800L1410 820L1360 840M1310 900L1330 840L1380 834M1142 872L1178 876" />
        <path d="M1776 0L1770 20M1840 44L1896 54M1930 50L1990 64M1812 206L1870 216M1596 0L1590 50M1766 270L1770 300" />
      </g>

      <RoadLayer roads={whiteRoads} casing="#cfccc8" fill="#fff" />
      <g fill="none" stroke="#b9a0bc" strokeWidth={2} strokeDasharray="3 7">
        <path d="M183 240L196 317L219 460L263 690M304 7L237 100M201 317L268 303M426 680L446 770L470 880" />
      </g>
      <RoadLayer roads={yellowRoads} casing="#a9ab4c" fill="#f7fabf" />
      <RoadLayer roads={orangeRoads} casing="#c08f3c" fill="#fcd6a4" />
      <RoadLayer roads={pinkRoads} casing="#dc4a78" fill="#e892a2" />

      {/* medians */}
      <g fill="none" stroke="#b5cf8c" strokeWidth={4}>
        <path d="M118 76L103 150L80 273L40 500L8 686M1912 0L1890 120M1884 300L1898 380L1914 460L1928 540M64 842L124 832" />
      </g>
      {/* bridge edges */}
      <g fill="none" stroke="#222" strokeWidth={2}>
        <path d="M1380 543L1402 588M1406 530L1430 577M1505 707L1531 734M1531 690L1552 712M1838 573L2026 563M1838 602L2030 592M848 766L880 780M838 790L872 802M1960 856L2024 870" />
      </g>
      <path d="M1090 620L1104 608L1100 622ZM1298 643L1320 632L1322 650ZM1618 610L1638 610L1620 622Z" fill="#cdebb0" stroke="#c08f3c" />

      {/* power lines */}
      {powerLines.map((line, i) => (
        <g key={i}>
          <polyline points={line.join(' ')} fill="none" stroke="#8c8c8c" strokeWidth={1} />
          {line.map(([x, y]) => (
            <rect key={`${x}-${y}`} x={x - 3} y={y - 3} width={7} height={7} fill="#f4f4f4" stroke="#808080" strokeWidth={2} />
          ))}
        </g>
      ))}

      {/* one-way arrows */}
      <g fill="#444" stroke="#444">
        {arrows.map(([x, y, a]) => (
          <path key={`${x}-${y}`} d="M-11 0H4M3 -4L12 0L3 4Z" strokeWidth={2} transform={`translate(${x} ${y}) rotate(${a})`} />
        ))}
      </g>

      <g fill="#0092da">
        {busStops.map(([x, y]) => (
          <rect key={`${x}-${y}`} x={x - 6} y={y - 6} width={12} height={12} />
        ))}
      </g>

      <MapLabels labels={streetLabels} color="#333" halo="#ffffffb0" />
      <MapLabels labels={districtLabels} color="#8d72a5" halo="#ffffffb0" />
      <MapLabels labels={[['Campinas', 716, 76, 0, 30]]} color="#8a8a8a" halo="#fff" />
      <MapLabels labels={[['Maxxi', 1431, 69, 0, 21], ['Atacado', 1431, 95, 0, 21]]} color="#6b6360" halo="#ffffffa0" />
      <MapLabels labels={[['Araújo', 943, 568, 84, 19]]} color="#4a80c4" halo="#ffffffa0" />
      <g fontStyle="italic">
        <MapLabels labels={[['Parque', 771, 825, 0, 20], ['São José', 771, 849, 0, 20]]} color="#3c9c50" halo="#ffffffa0" />
        <MapLabels labels={exits.map(([t, x, y]): Label => [t, x, y, 0, 21])} color="#b0283c" halo="#fff" />
      </g>
      <g fill="#0092da" fontSize={33} fontWeight={500} textAnchor="middle">
        {parkings.map(([x, y]) => (
          <text key={x} x={x} y={y + 11}>P</text>
        ))}
      </g>
      {[[80, 30], [1426, 239], [80, 705], [106, 757], [354, 745]].map(([x, y]) => (
        <ShopBag key={`${x}-${y}`} x={x} y={y} />
      ))}
      {[[58, 765], [912, 480], [1720, 687], [1974, 220]].map(([x, y]) => (
        <Cart key={x} x={x} y={y} />
      ))}
      <Cross x={766} y={24} s={14} />
      <Cross x={835} y={98} s={7} />
      <Cross x={1720} y={395} s={14} />
      <Cross x={1900} y={670} s={14} />
      <g fill="#777">
        <circle cx={1010} cy={24} r={4} />
        <circle cx={1025} cy={24} r={4} />
        <circle cx={1040} cy={24} r={4} />
      </g>
    </svg>
  );
}

/* ---------- Icons ---------- */

interface IconProps {
  size: number;
}

const strokeProps = {
  viewBox: '0 0 24 24',
  fill: 'none',
  stroke: 'currentColor',
  strokeWidth: 2,
  strokeLinecap: 'round' as const,
  strokeLinejoin: 'round' as const,
};

function GaugeIcon({ size }: IconProps) {
  return (
    <svg width={size} height={size} {...strokeProps}>
      <path d="M15.6 4.7A9.2 9.2 0 0 0 4.3 18.2Q4.8 19 5.8 19H18.2Q19.2 19 19.7 18.2A9.2 9.2 0 0 0 20.3 9.6" />
      <path d="M18.6 5.4L13.9 14.2A2.2 2.2 0 0 1 10.3 11.8Z" fill="currentColor" stroke="none" />
    </svg>
  );
}

function RouteIcon({ size }: IconProps) {
  return (
    <svg width={size} height={size} {...strokeProps}>
      <path d="M5 6V17.5A3.3 3.3 0 0 0 11.8 17.5V6.5A3.5 3.5 0 0 1 19 6.5V18" />
      <circle cx="5" cy="5.2" r="2.2" fill="currentColor" />
      <circle cx="19" cy="18.8" r="2.2" fill="currentColor" />
    </svg>
  );
}

function PlugOffIcon({ size }: IconProps) {
  return (
    <svg width={size} height={size} viewBox="0 0 24 24" fill="currentColor">
      <path d="M8 3a1 1 0 0 1 2 0V6.8L8 4.5ZM14 3a1 1 0 0 1 2 0V7h.5A1.5 1.5 0 0 1 18 8.500V16L10.200 7H14Z" />
      <path d="M6 8.300L16 19.300L14.500 20.500V22a1 1 0 0 1-1 1h-3a1 1 0 0 1-1-1v-2.500L6 15.500Z" />
      <path d="M4 4L20 22.500" stroke="currentColor" strokeWidth="2" strokeLinecap="round" />
    </svg>
  );
}

function OpenIcon({ size }: IconProps) {
  return (
    <svg width={size} height={size} {...strokeProps}>
      <path d="M11 4H5Q4 4 4 5V19Q4 20 5 20H19Q20 20 20 19V13M15 4H20V9M20 4L10 14.500" />
    </svg>
  );
}

function CopyIcon({ size }: IconProps) {
  return (
    <svg width={size} height={size} {...strokeProps}>
      <rect x="8" y="3" width="11" height="14" rx="1" />
      <path d="M4 7V20Q4 21 5 21H15" />
    </svg>
  );
}

function Chevron({ className, d, width }: { className: string; d: string; width: number }) {
  return (
    <svg className={className} viewBox="0 0 24 36" fill="none" stroke="currentColor" strokeWidth={width} strokeLinecap="round" strokeLinejoin="round">
      <path d={d} />
    </svg>
  );
}

function InfoButton({ label }: { label: string }) {
  return (
    <button type="button" aria-label={label} className="text-[#153bd3]">
      <MdInfo size={32} />
    </button>
  );
}

/* ---------- Panel ---------- */

interface SectionTitleProps {
  icon: React.ReactNode;
  title: string;
  info?: boolean;
}

function SectionTitle({ icon, title, info = true }: SectionTitleProps) {
  return (
    <div className="flex h-10 items-center gap-2">
      <span className="flex w-9 justify-center text-[#153bd3]">{icon}</span>
      <h2 className="text-[31px] leading-10 font-light text-[#6b7280]">{title}</h2>
      {info && <InfoButton label={`Sobre ${title}`} />}
    </div>
  );
}

function Metric({ label, children }: { label: string; children: React.ReactNode }) {
  return (
    <div className="flex flex-col items-center">
      <span className="text-[23px] leading-7 font-medium text-[#98a1b0]">{label}</span>
      <span className="flex h-7 items-center gap-2 text-[26px] leading-7">{children}</span>
    </div>
  );
}

const details = [
  { icon: <MdDeviceHub size={24} />, text: '133773311337733' },
  { icon: <MdBusiness size={24} />, text: 'Marine Telematics' },
  { icon: <MdLocationOn size={24} />, text: 'Avenida Josué di Bernardi, Santa Catarina, Brasil' },
];

const periods = ['1 Hora', '6 Horas', '12 Horas', '24 Horas', 'Personalizado'];

const rules = [
  { label: 'Ignição', icon: <MdKey size={60} /> },
  { label: 'Corte', icon: <PlugOffIcon size={54} /> },
  { label: 'Velocidade', icon: <GaugeIcon size={60} /> },
];

const journeyStats = [
  { icon: <RouteIcon size={26} />, text: '0 km' },
  { icon: <MdOutlineTimer size={26} />, text: '00:01:14' },
  { icon: <GaugeIcon size={28} />, text: '0.0 km/h' },
  { icon: <MdClearAll size={28} />, text: '0 km/h' },
];

const lockStatus = [
  { label: 'Status atual', value: 'Desbloqueado' },
  { label: 'Status do desbloqueio', value: 'Confirmado' },
];

function StatusBar() {
  return (
    <div className="absolute inset-x-0 top-0 flex h-12 items-center justify-between px-8 text-[24px] font-medium text-black">
      <div className="flex gap-5">
        <span>16:59</span>
        <span>Quarta-feira 25 de junho</span>
      </div>
      <div className="flex items-center gap-2">
        <MdWifi size={32} />
        <span>100%</span>
        <svg className="h-6 w-13" viewBox="0 0 52 24">
          <rect x="2" y="2" width="45" height="20" rx="6" fill="none" stroke="#6b6b6b" strokeWidth="2" />
          <rect x="4" y="4" width="41" height="16" rx="4" />
          <path d="M49 8Q52 12 49 16Z" fill="#6b6b6b" />
        </svg>
      </div>
    </div>
  );
}

export default function App() {
  return (
    <main className="flex min-h-screen flex-col bg-[#f0f4fa] font-['Inter',sans-serif] text-[#0f172a]">
      <section className="relative">
        <MapCanvas />
        <StatusBar />
        <button
          type="button"
          aria-label="Voltar"
          className="absolute top-[140px] left-5 flex size-21 items-center justify-center rounded-2xl bg-[#f0f4fa] shadow-[0_4px_8px_rgba(0,0,0,0.35)]"
        >
          <Chevron className="h-9 w-6" d="M16 6L6 18L16 30" width={5} />
        </button>
        <button
          type="button"
          aria-label="Menu"
          className="absolute top-[140px] right-10 flex size-18 items-center justify-center rounded-full bg-[#153bd3] text-white"
        >
          <MdMenu size={40} />
        </button>
        <div className="absolute top-[487px] left-[43%] flex h-[60px] w-[300px] items-center gap-2 rounded-full border-2 border-[#7f2630] bg-[#ad2b32] px-1 text-white">
          <MdNearMe size={36} className="shrink-0" />
          <span className="text-[30px] font-light whitespace-nowrap">Teste bloqueio ...</span>
        </div>
      </section>

      <section className="relative -mt-10 flex flex-1 flex-col rounded-t-[40px] bg-[#f0f4fa] px-8 pt-8">
        <div className="mx-auto h-3 w-20 rounded-full bg-[#9e9e9e]" />

        <header className="border-b-2 border-[#e2e8f0] pt-5 pb-3">
          <div className="flex items-center justify-between">
            <span className="flex items-center gap-2 text-[22px] font-light text-[#98a1b0]">
              <MdAccessTime size={24} />
              24/06/2025 - 17:19
            </span>
            <span className="flex h-[50px] items-center rounded-[10px] bg-[#ad2b32] px-6 text-[23px] font-medium text-white">
              Ignição Desligada
            </span>
          </div>
          <div className="mt-2 flex gap-4">
            <span className="flex size-20 items-center justify-center rounded-[20px] bg-[#ad2b32] text-white">
              <MdDirectionsCar size={46} />
            </span>
            <div>
              <h1 className="flex h-[52px] items-baseline gap-2 text-[35px] leading-[52px] font-medium">
                Teste bloqueio vehicle
                <span className="text-[26px] font-light">(ABC1337)</span>
              </h1>
              <ul>
                {details.map(({ icon, text }) => (
                  <li key={text} className="flex h-[34px] items-center gap-2 text-[23px] font-light text-[#98a1b0]">
                    {icon}
                    {text}
                  </li>
                ))}
              </ul>
            </div>
          </div>
        </header>

        <div className="border-b-2 border-[#e2e8f0] pt-[14px] pb-5">
          <div className="flex justify-between px-4">
            <Metric label="Velocidade">
              <span className="text-[#98a1b0]"><GaugeIcon size={28} /></span>
              <span className="font-light">0.0 km/h</span>
            </Metric>
            <Metric label="Ignição">
              <MdKeyOff size={28} color="#f44336" />
            </Metric>
            <Metric label="Tensão">
              <MdBatteryChargingFull size={26} color="#98a1b0" />
              <span className="font-light">0.0 V</span>
            </Metric>
            <Metric label="Satélite">
              <MdSatelliteAlt size={26} color="#98a1b0" />
              <span className="font-light">0</span>
            </Metric>
          </div>
          <div className="flex items-center justify-between px-4 pt-[22px]">
            <p className="text-[31px] font-light">Avenida Josué di Bernardi, Santa Catarina, Brasil</p>
            <div className="flex flex-col gap-5 text-[#1e293b]">
              <button type="button" aria-label="Abrir no mapa"><OpenIcon size={48} /></button>
              <button type="button" aria-label="Copiar endereço"><CopyIcon size={48} /></button>
            </div>
          </div>
        </div>

        <div className="border-b-2 border-[#e2e8f0] pt-[30px] pb-[42px]">
          <SectionTitle icon={<MdHistory size={36} />} title="Histórico rápido" />
          <div className="mt-7 flex justify-center gap-2">
            {periods.map((period) => (
              <button key={period} type="button" className="h-[68px] rounded-full border-2 border-[#98a1b0] px-6 text-[30px] font-light">
                {period}
              </button>
            ))}
          </div>
        </div>

        <div className="border-b-2 border-[#e2e8f0] pt-8 pb-[62px]">
          <SectionTitle icon={<MdBolt size={38} />} title="Regras rápidas" />
          <div className="mt-4 flex gap-9">
            {rules.map(({ label, icon }) => (
              <button key={label} type="button" className="flex w-32 flex-col items-center gap-[6px]">
                <span className="flex size-32 items-center justify-center rounded-[20px] border-2 border-[#98a1b0] text-[#153bd3]">
                  {icon}
                </span>
                <span className="text-[23px] leading-7 font-light">{label}</span>
              </button>
            ))}
          </div>
        </div>

        <div className="border-b-2 border-[#e2e8f0] pt-8 pb-[42px]">
          <div className="flex items-center justify-between">
            <SectionTitle icon={<RouteIcon size={34} />} title="Última Jornada" />
            <a href="#jornadas" className="text-[25px] font-medium text-[#153bd3] underline">Ver outras jornadas</a>
          </div>
          <a
            href="#jornada"
            aria-label="Abrir última jornada"
            className="mx-[6px] mt-7 flex h-[180px] items-center justify-between rounded-[20px] bg-[#f0f4fa] pr-5 pl-[10px] shadow-[0_2px_8px_rgba(0,0,0,0.12)]"
          >
            <div className="pt-2">
              <p className="flex h-10 items-center gap-[10px] text-[26px] font-light">
                <MdAccessTime size={28} color="#153bd3" />
                24/06/2025 - 17:17 - 24/06/2025 - 17:18
              </p>
              <div className="grid w-[372px] grid-cols-2 text-[26px] font-light text-[#98a1b0]">
                {journeyStats.map(({ icon, text }) => (
                  <span key={text} className="flex h-[52px] items-center gap-[10px]">
                    <span className="flex w-7 justify-center">{icon}</span>
                    {text}
                  </span>
                ))}
              </div>
            </div>
            <Chevron className="h-9 w-6 text-[#153bd3]" d="M4 3L19 18L4 33" width={4} />
          </a>
        </div>

        <div className="pt-[30px] pb-[70px]">
          <SectionTitle icon={<MdLock size={36} />} title="Informações sobre o bloqueio" info={false} />
          <div className="mx-[6px] mt-4 grid grid-cols-2 gap-4">
            {lockStatus.map(({ label, value }) => (
              <div key={label} className="flex h-[136px] flex-col items-center justify-center gap-3 rounded-[20px] bg-white shadow-[0_2px_8px_rgba(0,0,0,0.12)]">
                <span className="flex h-8 items-center gap-2 text-[23px] font-light text-[#98a1b0]">
                  {label}
                  <InfoButton label={`Sobre ${label}`} />
                </span>
                <strong className="text-[30px] leading-10 font-medium">{value}</strong>
              </div>
            ))}
          </div>
          <button type="button" className="mt-4 flex h-[106px] w-full items-center justify-center gap-4 rounded-[20px] bg-[#153bd3] text-[35px] font-medium text-white">
            <MdLock size={48} />
            Bloquear
          </button>
        </div>
      </section>

      <footer className="flex h-[50px] items-center justify-center bg-black pt-2">
        <div className="h-3 w-[630px] max-w-full rounded-full bg-[#4c4c4c]" />
      </footer>
    </main>
  );
}
